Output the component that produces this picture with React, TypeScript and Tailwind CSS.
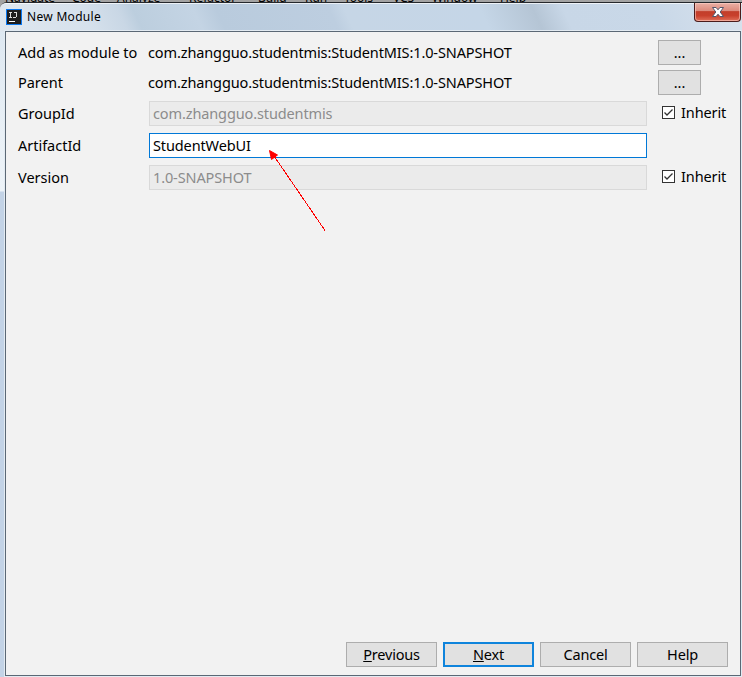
import type { ReactNode } from "react";

const menus = [
  { name: "Navigate", width: "w-[67px]" },
  { name: "Code", width: "w-[45px]" },
  { name: "Analyze", width: "w-[72px]" },
  { name: "Refactor", width: "w-[69px]" },
  { name: "Build", width: "w-[47px]" },
  { name: "Run", width: "w-[39px]" },
  { name: "Tools", width: "w-[49px]" },
  { name: "VCS", width: "w-[39px]" },
  { name: "Window", width: "w-[68px]" },
  { name: "Help", width: "w-[40px]" },
];

// only the lower edge of the parent window's menu shows above the dialog
function MenuStrip() {
  return (
    <div className="flex h-[2px] shrink-0 items-end overflow-hidden bg-[#a3a3a3] pl-[5px] text-[12px] leading-[12px] text-black">
      {menus.map((menu) => (
        <span key={menu.name} className={`${menu.width} shrink-0 -mb-[2px]`}>
          {menu.name}
        </span>
      ))}
    </div>
  );
}

function IdeaLogo() {
  return (
    <svg width="16" height="16" viewBox="0 0 16 16" shapeRendering="crispEdges">
      <rect width="16" height="16" fill="#0a78f0" />
      <rect x="1" y="1" width="14" height="14" fill="#1d1d1f" />
      <path
        d="M3 3.5h3M4.5 4v4M3 8.5h3M8 3.5h3M10.5 4v4M7 8.5h3"
        stroke="#dcdcdc"
        fill="none"
      />
      <path d="M3 12.5h6" stroke="#fff" />
    </svg>
  );
}

function CloseButton() {
  return (
    <button className="-mt-px flex h-[19px] w-[47px] items-center justify-center rounded-b-[4px] border border-t-0 border-[#4a1c1c] bg-[linear-gradient(#eab0a5_0%,#dc8c7e_42%,#c23e2a_48%,#c8402c_70%,#e0705a_100%)] shadow-[inset_0_0_0_1px_rgba(255,215,205,0.55)]">
      <svg width="12" height="10" viewBox="0 0 12 10">
        <path
          d="M.5 .5h3.6L6 2.8 7.9 .5h3.6L8.2 5l3.3 4.5H7.9L6 7.2 4.1 9.5H.5L3.8 5z"
          fill="#fff"
          stroke="#52566b"
        />
      </svg>
    </button>
  );
}

function TitleBar() {
  return (
    <div className="flex h-[28px] shrink-0 items-start justify-between">
      <div className="flex items-center pl-[6px] pt-[5px]">
        <IdeaLogo />
        <span className="ml-[5px] text-[12px] leading-4 tracking-[0.3px]">
          New Module
        </span>
      </div>
      <div className="pr-px">
        <CloseButton />
      </div>
    </div>
  );
}

function Row({
  label,
  className,
  children,
}: {
  label: string;
  className: string;
  children: ReactNode;
}) {
  return (
    <div className={`flex h-[25px] items-center ${className}`}>
      <label className="w-[130px] shrink-0 whitespace-nowrap">{label}</label>
      {children}
    </div>
  );
}

function Coordinates() {
  return (
    <span className="w-[510px] whitespace-nowrap tracking-[-0.12px]">
      com.zhangguo.studentmis:StudentMIS:1.0-SNAPSHOT
    </span>
  );
}

function BrowseButton() {
  return (
    <button className="h-[25px] w-[43px] border border-[#adadad] bg-[#e1e1e1] leading-[23px]">
      ...
    </button>
  );
}

function Field({ value, disabled }: { value: string; disabled?: boolean }) {
  return (
    <div
      className={`ml-px h-[25px] w-[498px] border pl-[3px] leading-[23px] tracking-[-0.12px] ${
        disabled
          ? "border-[#d9d9d9] bg-[#ebebeb] text-[#8c8c8c]"
          : "border-[#0078d7] bg-white"
      }`}
    >
      {value}
    </div>
  );
}

function Inherit() {
  return (
    <div className="ml-[15px] flex items-center pb-[2px]">
      <svg width="13" height="13" viewBox="0 0 13 13">
        <rect x=".5" y=".5" width="12" height="12" fill="#fff" stroke="#333" />
        <path d="M2.5 6.5L5 9l5.5-5.5" fill="none" stroke="#333" strokeWidth="1.3" />
      </svg>
      <span className="ml-[6px] leading-[23px] tracking-[-0.12px]">Inherit</span>
    </div>
  );
}

function DialogButton({
  primary,
  children,
}: {
  primary?: boolean;
  children: ReactNode;
}) {
  return (
    <button
      className={`flex h-[25px] w-[91px] items-center justify-center bg-[#e1e1e1] tracking-[-0.2px] ${
        primary ? "border-2 border-[#0f84dc]" : "border border-[#adadad]"
      }`}
    >
      <span>{children}</span>
    </button>
  );
}

function Arrow() {
  return (
    <svg
      className="absolute left-[268px] top-[149px]"
      width="60"
      height="84"
      viewBox="0 0 60 84"
    >
      <path d="M6 7L57 81.5" stroke="#f00" shapeRendering="crispEdges" />
      <path d="M1.5 1.5L9.5 6L3.5 10.5z" fill="#f00" stroke="#f00" />
    </svg>
  );
}

export default function App() {
  return (
    <div className="relative flex h-[677px] w-[742px] flex-col overflow-hidden bg-[#a3a3a3] font-['Noto_Sans',sans-serif] text-[14.5px] tracking-[-0.02px] text-black">
      <MenuStrip />
      <div className="flex flex-1 flex-col rounded-tl-[7px] border-t border-[#25282c] bg-[linear-gradient(#dbe6f0_0px,#e9f0f6_130px,#edf3f8_188px,#c3d3e6_189px)]">
        <div className="rounded-tl-[6px] border-t border-white/70 bg-[linear-gradient(65deg,#dfe7ef_0%,#d6e1ec_12%,#c9d7e5_17%,#bccede_19%,#c4d4e4_27%,#b9cbdd_30%,#bdcee0_45%,#c6d6e6_47%,#c5d6e7_65%,#b5c5d5_72%,#c8d7e7_76%,#c9d8e8_88%,#d8e2ed_100%)]">
          <TitleBar />
        </div>
        <div className="-mt-px ml-[5px] mr-px flex h-[645px] flex-col justify-between border border-[#5b6875] bg-[#f2f2f2] shadow-[0_0_0_1px_#e3ebf2]">
          <div className="pl-[12px]">
            <Row label="Add as module to" className="mt-[8px]">
              <Coordinates />
              <BrowseButton />
            </Row>
            <Row label="Parent" className="mt-[5px]">
              <Coordinates />
              <BrowseButton />
            </Row>
            <Row label="GroupId" className="mt-[6px]">
              <Field value="com.zhangguo.studentmis" disabled />
              <Inherit />
            </Row>
            <Row label="ArtifactId" className="mt-[7px]">
              <Field value="StudentWebUI" />
            </Row>
            <Row label="Version" className="mt-[7px]">
              <Field value="1.0-SNAPSHOT" disabled />
              <Inherit />
            </Row>
          </div>
          <div className="mb-[8px] mr-[12px] flex justify-end gap-[6px]">
            <DialogButton>
              <u>P</u>revious
            </DialogButton>
            <DialogButton primary>
              <u>N</u>ext
            </DialogButton>
            <DialogButton>Cancel</DialogButton>
            <DialogButton>Help</DialogButton>
          </div>
        </div>
      </div>
      <Arrow />
    </div>
  );
}
